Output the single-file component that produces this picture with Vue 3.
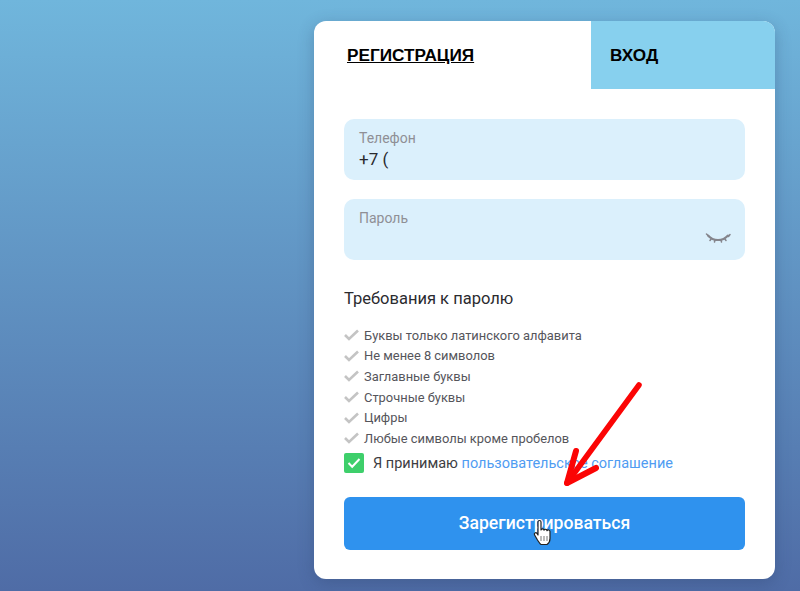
<template>
  <div class="page">
    <div class="card">
      <div class="tabs">
        <div class="tab tab-active"><span>РЕГИСТРАЦИЯ</span></div>
        <div class="tab tab-other"><span>ВХОД</span></div>
      </div>

      <form class="form" @submit.prevent>
        <div class="field">
          <div class="field-label">Телефон</div>
          <div class="field-value">+7 (</div>
        </div>

        <div class="field field-password">
          <div class="field-label">Пароль</div>
          <svg class="eye" width="26" height="14" viewBox="0 0 26 14" fill="none" stroke="#85858c" stroke-width="2" stroke-linecap="round">
            <path d="M3 4.500c3 3.400 6.200 4.600 10 4.600s7-1.200 10-4.600"/>
            <path d="M1.500 3l2.500 2.500M23.500 5.500L25 3.500M6.500 7.500L5 9.500M10 8.800L9.500 11M16 8.800l.5 2.200M19.500 7.500L21 9.500" stroke-width="1.500"/>
          </svg>
        </div>

        <h3 class="req-title">Требования к паролю</h3>
        <ul class="req-list">
          <li v-for="item in requirements" :key="item">
            <svg width="15" height="12" viewBox="0 0 15 12" fill="none" stroke="#c4c4c4" stroke-width="2.600">
              <path d="M1 6l4 4 9-8.500"/>
            </svg>
            {{ item }}
          </li>
        </ul>

        <label class="agree">
          <span class="checkbox">
            <svg width="14" height="12" viewBox="0 0 14 12" fill="none" stroke="#fff" stroke-width="2">
              <path d="M1.500 6l3.700 3.700 7.300-7.700"/>
            </svg>
          </span>
          <span class="agree-text">Я принимаю <a class="agree-link">пользовательское соглашение</a></span>
        </label>

        <button class="submit" type="button">Зарегистрироваться</button>
      </form>
    </div>

    <!-- стрелка и курсор поверх скриншота -->
    <svg class="arrow" width="90" height="120" viewBox="0 0 90 120" fill="none" stroke="#fb0505" stroke-linecap="round" stroke-linejoin="round">
      <path d="M78 5L6 103" stroke-width="5.500"/>
      <path d="M15 71L6 103l29-15" stroke-width="6"/>
    </svg>
    <svg class="hand" width="20" height="28" viewBox="0 0 20 28">
      <path d="M5 3c0-2 3-2 3 0v8c.5-1.500 3-1.500 3 .2.500-1.400 3-1.200 3 .5.600-1.200 3-.9 3 .8v7c0 3-1.500 5-3 6H8c-1.500-1-2.500-3-3.500-4.500L1.600 16c-1-1.800 1.200-3.200 2.400-1.600L5 16z" fill="#fff" stroke="#222" stroke-width="1.200" stroke-linejoin="round"/>
      <path d="M8 17v5M11 17v5M14 17v5" stroke="#777" stroke-width="1"/>
    </svg>
  </div>
</template>

<script setup>
const requirements = [
  'Буквы только латинского алфавита',
  'Не менее 8 символов',
  'Заглавные буквы',
  'Строчные буквы',
  'Цифры',
  'Любые символы кроме пробелов',
]
</script>

<style scoped>
.page {
  position: relative;
  width: 800px;
  height: 591px;
  overflow: hidden;
  box-sizing: border-box;
  padding: 21px 25px 0 314px;
  background: linear-gradient(180deg, #70b6dc 0%, #4f6ca6 100%);
  font-family: Roboto, "Noto Sans", sans-serif;
}

.card {
  width: 461px;
  height: 558px;
  background: #fff;
  border-radius: 12px;
  overflow: hidden;
  box-shadow: 0 4px 16px rgba(40, 60, 100, 0.3);
}

.tabs {
  display: flex;
  height: 68px;
}

.tab {
  display: flex;
  align-items: center;
  box-sizing: border-box;
  font-family: "Liberation Sans", Arial, sans-serif;
  font-weight: 700;
  font-size: 17.200px;
  color: #000;
}

.tab-active {
  width: 277px;
  padding-left: 33px;
}
.tab-active span { text-decoration: underline; }

.tab-other {
  width: 184px;
  padding-left: 19px;
  background: #87d0ee;
}

.form {
  display: flex;
  flex-direction: column;
  padding: 30px 30px 0;
}

.field {
  position: relative;
  height: 61px;
  box-sizing: border-box;
  padding: 11px 15px 0;
  background: #dbf0fc;
  border-radius: 10px;
}

.field-password { margin-top: 19px; }

.field-label {
  font-size: 14px;
  line-height: 16px;
  color: #8f8f95;
}

.field-value {
  margin-top: 3px;
  font-size: 17px;
  line-height: 20px;
  color: #2a2a2e;
}

.eye {
  position: absolute;
  right: 14px;
  top: 32px;
}

.req-title {
  margin: 29px 0 0;
  font-size: 16.500px;
  line-height: 20px;
  font-weight: 400;
  color: #2b2b2f;
}

.req-list {
  margin: 16px 0 0;
  padding: 0;
  list-style: none;
}

.req-list li {
  display: flex;
  align-items: center;
  gap: 5px;
  height: 20.600px;
  font-size: 12.900px;
  color: #55555b;
}

.agree {
  display: flex;
  align-items: center;
  gap: 9px;
  margin-top: 4px;
  font-size: 14.500px;
  color: #3d3d42;
}

.agree-text { padding-top: 2px; }

.checkbox {
  display: flex;
  align-items: center;
  justify-content: center;
  width: 20px;
  height: 20px;
  background: #3ecf6b;
  border-radius: 2px;
}

.agree-link { color: #4f9cf2; }

.submit {
  height: 53px;
  margin-top: 24px;
  border: none;
  border-radius: 6px;
  background: #2f92ee;
  color: #fff;
  font-family: Roboto, sans-serif;
  font-size: 17.600px;
  font-weight: 500;
}

.arrow {
  position: absolute;
  left: 561px;
  top: 380px;
}

.hand {
  position: absolute;
  left: 533px;
  top: 519px;
}
</style>
